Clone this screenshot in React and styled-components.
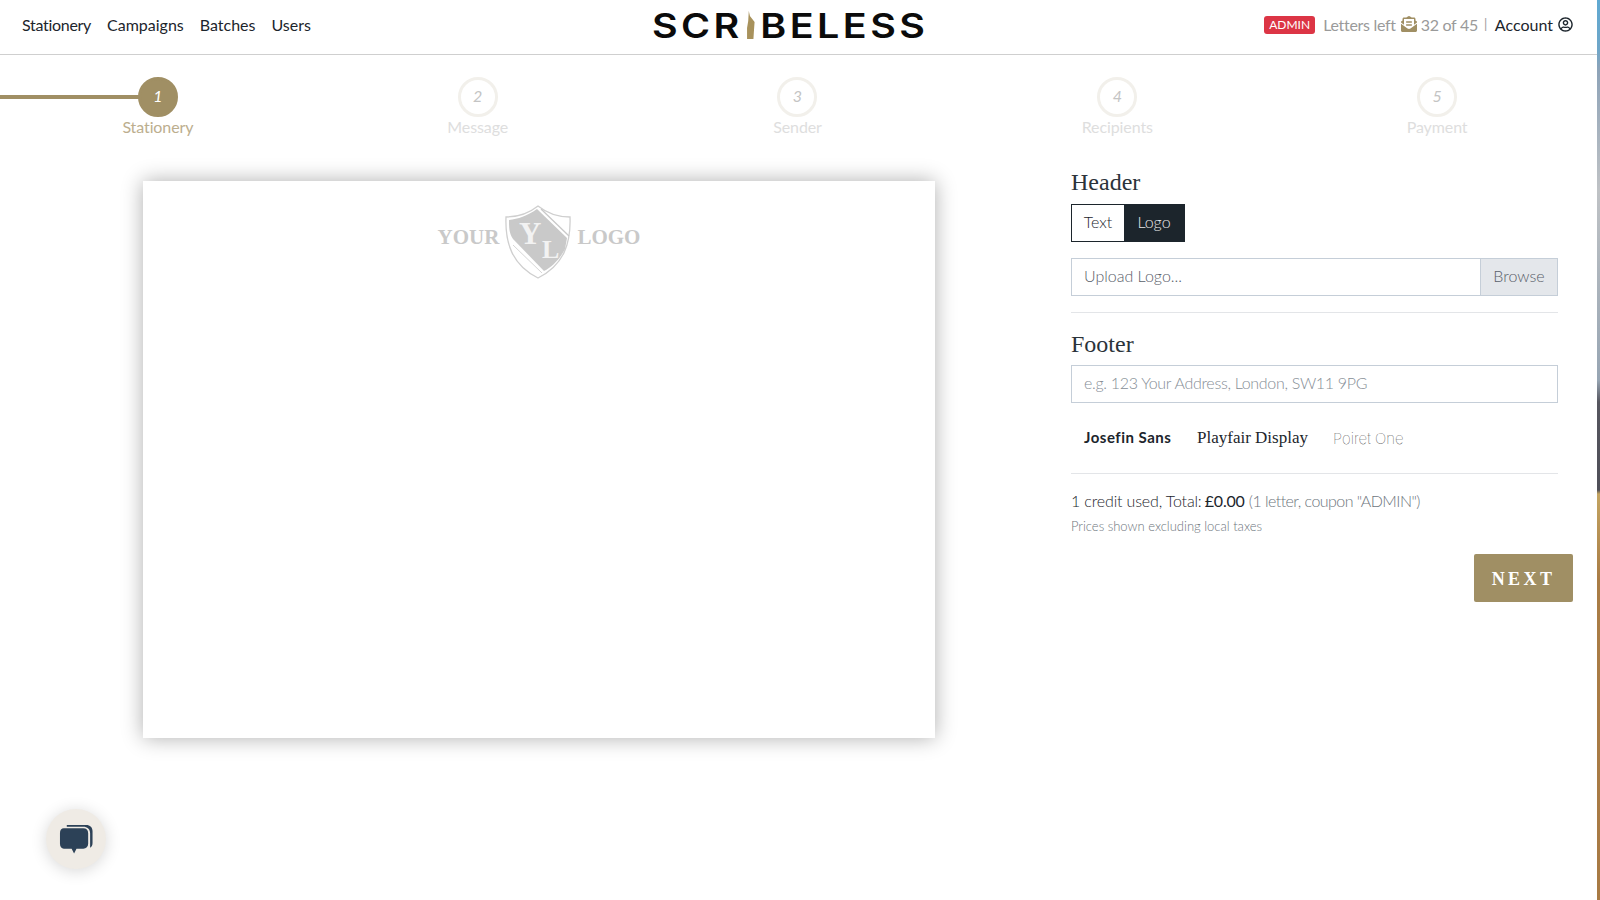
import React from 'react'
import styled, { createGlobalStyle } from 'styled-components'
import { FaEnvelopeOpenText, FaRegUserCircle } from 'react-icons/fa'

const GOLD = '#a08f64'
const INK = '#1c252c'
const sans = '"Lato", "Liberation Sans", sans-serif'
const serif = '"Liberation Serif", serif'

const GlobalStyle = createGlobalStyle`
  html, body { margin: 0; padding: 0; background: #fff; }
  body { font-family: ${sans}; color: ${INK}; font-size: 16px; overflow: hidden; font-variant-ligatures: none; }
  * { box-sizing: border-box; }
`

const Desktop = styled.div`
  display: flex;
  height: 900px;
`
const Page = styled.div`
  flex: 1;
  min-width: 0;
  position: relative;
  background: #fff;
`
const WindowEdge = styled.div`
  width: 3px;
  background: linear-gradient(180deg, #5fa9d2 0, #6fa6c8 50px, #8ea3b8 70px, #bfc2c5 190px, #97a5b3 380px, #56565f 402px, #4f4f58 490px, #c3a461 494px, #a97c45 580px, #a87a44 100%);
`

////////// Header //////////

const Header = styled.header`
  height: 55px;
  display: flex;
  justify-content: space-between;
  align-items: center;
  padding: 0 24px 6px 22px;
  border-bottom: 1px solid #cfcfcf;
`
const Nav = styled.nav`
  display: flex;
  gap: 16px;
`
const NavItem = styled.a`
  font-size: 16px;
  color: ${INK};
  &:first-child { letter-spacing: -0.3px; }
`
const Logo = styled.div`
  display: flex;
  align-items: center;
  margin: 3px 0 0 5px;
  font-family: "Inter", sans-serif;
  font-weight: 600;
  font-size: 34px;
  line-height: 48px;
  letter-spacing: 3px;
  color: #0b0b0b;
  transform: scaleX(1.16);
`
const Quill = styled.svg`
  width: 8px;
  height: 28px;
  margin: -2px 4px 0 3px;
`
const AccountBar = styled.div`
  display: flex;
  align-items: center;
  font-size: 16px;
  letter-spacing: -0.3px;
  color: #9a9a9a;
`
const AdminBadge = styled.span`
  background: #dc3545;
  color: #fff;
  font-size: 12px;
  letter-spacing: 0;
  line-height: 18px;
  height: 18px;
  width: 51px;
  margin-top: 2px;
  text-align: center;
  border-radius: 3px;
  margin-right: 8px;
`
const LettersIcon = styled(FaEnvelopeOpenText)`
  color: ${GOLD};
  font-size: 16px;
  margin: 0 4px 0 5px;
`
const Divider = styled.span`
  margin: 0 8px 0 6px;
  font-size: 13px;
  color: #999;
`
const AccountLink = styled.a`
  display: flex;
  align-items: center;
  gap: 5px;
  letter-spacing: 0;
  color: ${INK};
`
const AccountIcon = styled(FaRegUserCircle)`
  font-size: 15px;
`

////////// Stepper //////////

const Stepper = styled.ol`
  display: grid;
  grid-template-columns: repeat(5, 1fr);
  margin: 0 0 0 -2px;
  padding: 22px 0 0;
  list-style: none;
`
const Step = styled.li`
  position: relative;
  display: flex;
  flex-direction: column;
  align-items: center;

  ${(p) => p.$active && `
    &::before {
      content: "";
      position: absolute;
      left: 0;
      top: 18px;
      width: 50%;
      height: 4px;
      background: ${GOLD};
    }
  `}
`
const StepCircle = styled.span`
  position: relative;
  width: 40px;
  height: 40px;
  border-radius: 50%;
  display: flex;
  align-items: center;
  justify-content: center;
  padding-bottom: 3px;
  font-style: italic;
  font-size: 16px;
  background: ${(p) => (p.$active ? GOLD : '#fff')};
  border: 3px solid ${(p) => (p.$active ? GOLD : '#f2f0eb')};
  color: ${(p) => (p.$active ? '#fff' : '#c4c4c4')};
`
const StepLabel = styled.span`
  font-size: 16px;
  line-height: 24px;
  margin-top: -2px;
  letter-spacing: -0.1px;
  color: ${(p) => (p.$active ? '#bcae8e' : '#dedede')};
`

////////// Workspace //////////

const Workspace = styled.main`
  display: flex;
  padding: 29px 0 0 143px;
`
const Paper = styled.section`
  width: 792px;
  height: 557px;
  margin: 13px 136px 0 0;
  background: #fff;
  box-shadow: 0 0 20px rgba(0, 0, 0, 0.32);
  display: flex;
  justify-content: center;
  padding-top: 24px;
`
const LogoMark = styled.div`
  display: flex;
  align-items: center;
  height: 74px;
  gap: 5px;
  font-family: ${serif};
  font-weight: 700;
  font-size: 21px;
  color: #c9c9c9;
`
const LogoWord = styled.span`
  margin-bottom: 10px;
`
const Shield = styled.svg`
  width: 68px;
  height: 74px;
`
const Form = styled.aside`
  width: 487px;
  display: flex;
  flex-direction: column;
  align-items: stretch;
`
const Heading = styled.h3`
  margin: ${(p) => p.$top || 0}px 0 2px;
  font-family: ${serif};
  font-weight: 400;
  font-size: 24px;
  line-height: 28px;
  color: #2b333a;
`
const Toggle = styled.div`
  display: flex;
  align-self: flex-start;
  margin-top: 6px;
  height: 38px;
  border: 1px solid ${INK};
`
const ToggleOption = styled.button`
  border: none;
  padding: 0 0 4px;
  width: ${(p) => (p.$on ? '60px' : '52px')};
  font: inherit;
  font-weight: 300;
  background: ${(p) => (p.$on ? INK : '#fff')};
  color: ${(p) => (p.$on ? '#e8e8e8' : INK)};
`
const UploadField = styled.div`
  display: flex;
  margin-top: 16px;
  height: 38px;
  border: 1px solid #c5ced8;
  font-weight: 300;
  color: #59606a;
`
const UploadLabel = styled.span`
  flex: 1;
  padding-left: 12px;
  line-height: 34px;
`
const BrowseButton = styled.span`
  width: 77px;
  text-align: center;
  line-height: 34px;
  background: #e4e7eb;
  border-left: 1px solid #c5ced8;
`
const Rule = styled.hr`
  width: 100%;
  margin: ${(p) => p.$top}px 0 0;
  border: none;
  border-top: 1px solid #e3e5e8;
`
const TextInput = styled.input`
  margin-top: 5px;
  height: 38px;
  width: 100%;
  padding: 0 12px 3px;
  border: 1px solid #c5ced8;
  border-radius: 0;
  outline: none;
  font-family: ${sans};
  font-size: 16px;
  font-weight: 300;
  letter-spacing: -0.3px;
  &::placeholder { color: #868e96; opacity: 1; }
`
const FontRow = styled.div`
  display: flex;
  align-items: center;
  height: 30px;
  margin-top: 20px;
  padding-left: 13px;
`
const FontOption = styled.span`
  font-family: ${(p) => p.$family};
  font-size: ${(p) => p.$size}px;
  font-weight: ${(p) => p.$weight};
  letter-spacing: ${(p) => p.$spacing || 0}px;
  width: ${(p) => p.$width}px;
  color: ${(p) => p.$color || INK};
  margin-bottom: ${(p) => p.$lift || 0}px;
`
const Summary = styled.p`
  margin: 15px 0 0;
  font-size: 16px;
  line-height: 24px;
  font-weight: 300;
  letter-spacing: -0.15px;
  color: ${INK};
`
const Total = styled.strong`
  font-weight: 400;
  letter-spacing: -0.2px;
  margin-left: -1px;
`
const SummaryNote = styled.span`
  letter-spacing: -0.55px;
  color: #6d757d;
`
const TaxNote = styled.small`
  margin-top: 4px;
  font-size: 13px;
  line-height: 18px;
  font-weight: 300;
  color: #6d757d;
`
const NextButton = styled.button`
  align-self: flex-end;
  margin: 19px -15px 0 0;
  width: 99px;
  height: 48px;
  padding: 2px 0 0;
  border: none;
  border-radius: 2px;
  background: ${GOLD};
  color: #fff;
  font-family: ${serif};
  font-weight: 700;
  font-size: 18px;
  letter-spacing: 3.4px;
`

////////// Chat bubble //////////

const ChatButton = styled.button`
  position: absolute;
  left: 46px;
  top: 809px;
  width: 60px;
  height: 60px;
  padding: 0;
  border: none;
  border-radius: 50%;
  background: #efebe5;
  box-shadow: 0 2px 16px rgba(0, 0, 0, 0.16);
  display: flex;
  align-items: center;
  justify-content: center;
`

const navItems = ['Stationery', 'Campaigns', 'Batches', 'Users']
const steps = ['Stationery', 'Message', 'Sender', 'Recipients', 'Payment']

const App = () => {
  return (
    <Desktop>
      <GlobalStyle />
      <Page>
        <Header>
          <Nav>
            {navItems.map((item) => (
              <NavItem key={item}>{item}</NavItem>
            ))}
          </Nav>
          <Logo>
            SCR
            <Quill viewBox="0 0 8 28" aria-hidden="true">
              <path d="M2.500 0 L3.500 5 L7.500 11 L7 19 L6.500 28 L1 28 L1 17 L2 10 Z" fill="#a8925c" />
            </Quill>
            BELESS
          </Logo>
          <AccountBar>
            <AdminBadge>ADMIN</AdminBadge>
            Letters left
            <LettersIcon />
            32 of 45
            <Divider>|</Divider>
            <AccountLink>
              Account
              <AccountIcon />
            </AccountLink>
          </AccountBar>
        </Header>

        <Stepper>
          {steps.map((label, i) => (
            <Step key={label} $active={i === 0}>
              <StepCircle $active={i === 0}>{i + 1}</StepCircle>
              <StepLabel $active={i === 0}>{label}</StepLabel>
            </Step>
          ))}
        </Stepper>

        <Workspace>
          <Paper>
            <LogoMark>
              <LogoWord>YOUR</LogoWord>
              <Shield viewBox="0 0 68 74" aria-hidden="true">
                <path d="M34 1 C44 9 56 12 66 12 C67 38 60 60 34 73 C8 60 1 38 2 12 C12 12 24 9 34 1 Z" fill="#fff" stroke="#cfcfcf" strokeWidth="1.300" />
                <path d="M33 4 C23 11 14 14 5 15 C5 22 5 28 9 34 L40 66 C48 62 56 54 61 44 L63 33 Z" fill="#c9c9c9" />
                <path d="M37 4 L65 31" stroke="#c9c9c9" strokeWidth="1.300" fill="none" />
                <path d="M9 40 L38 68" stroke="#d6d6d6" strokeWidth="1" fill="none" />
                <text x="15" y="39" fontFamily="Liberation Serif" fontSize="31" fill="#f2f2f2">Y</text>
                <text x="38" y="53" fontFamily="Liberation Serif" fontSize="26" fill="#f2f2f2">L</text>
              </Shield>
              <LogoWord>LOGO</LogoWord>
            </LogoMark>
          </Paper>

          <Form>
            <Heading>Header</Heading>
            <Toggle>
              <ToggleOption>Text</ToggleOption>
              <ToggleOption $on>Logo</ToggleOption>
            </Toggle>
            <UploadField>
              <UploadLabel>Upload Logo...</UploadLabel>
              <BrowseButton>Browse</BrowseButton>
            </UploadField>
            <Rule $top={16} />
            <Heading $top={17}>Footer</Heading>
            <TextInput placeholder="e.g. 123 Your Address, London, SW11 9PG" />
            <FontRow>
              <FontOption $family={sans} $size={15} $weight={700} $spacing={0.5} $width={113} $lift={3}>Josefin Sans</FontOption>
              <FontOption $family={serif} $size={17} $weight={400} $width={136}>Playfair Display</FontOption>
              <FontOption $family={'"Inter", sans-serif'} $size={15} $weight={100} $color="#222">Poiret One</FontOption>
            </FontRow>
            <Rule $top={20} />
            <Summary>
              1 credit used, Total: <Total>£0.00</Total> <SummaryNote>(1 letter, coupon "ADMIN")</SummaryNote>
            </Summary>
            <TaxNote>Prices shown excluding local taxes</TaxNote>
            <NextButton>NEXT</NextButton>
          </Form>
        </Workspace>

        <ChatButton aria-label="Chat">
          <svg width="35" height="32" viewBox="0 0 36 32">
            <path d="M8 1.500 H28 C32 1.500 34.500 4 34.500 8 V20 C34.500 22.500 33.500 24 32 25 V10 C32 6 29 3.500 25 3.500 H8 Z" fill="#2c4157" />
            <path d="M5 5 H25 C28 5 30 7 30 10 V21 C30 24 28 26 25 26 H18 L15.500 31 L13 26 H5 C2.500 26 1 24 1 21 V10 C1 7 2.500 5 5 5 Z" fill="#2c4157" />
          </svg>
        </ChatButton>
      </Page>
      <WindowEdge />
    </Desktop>
  )
}

export default App
